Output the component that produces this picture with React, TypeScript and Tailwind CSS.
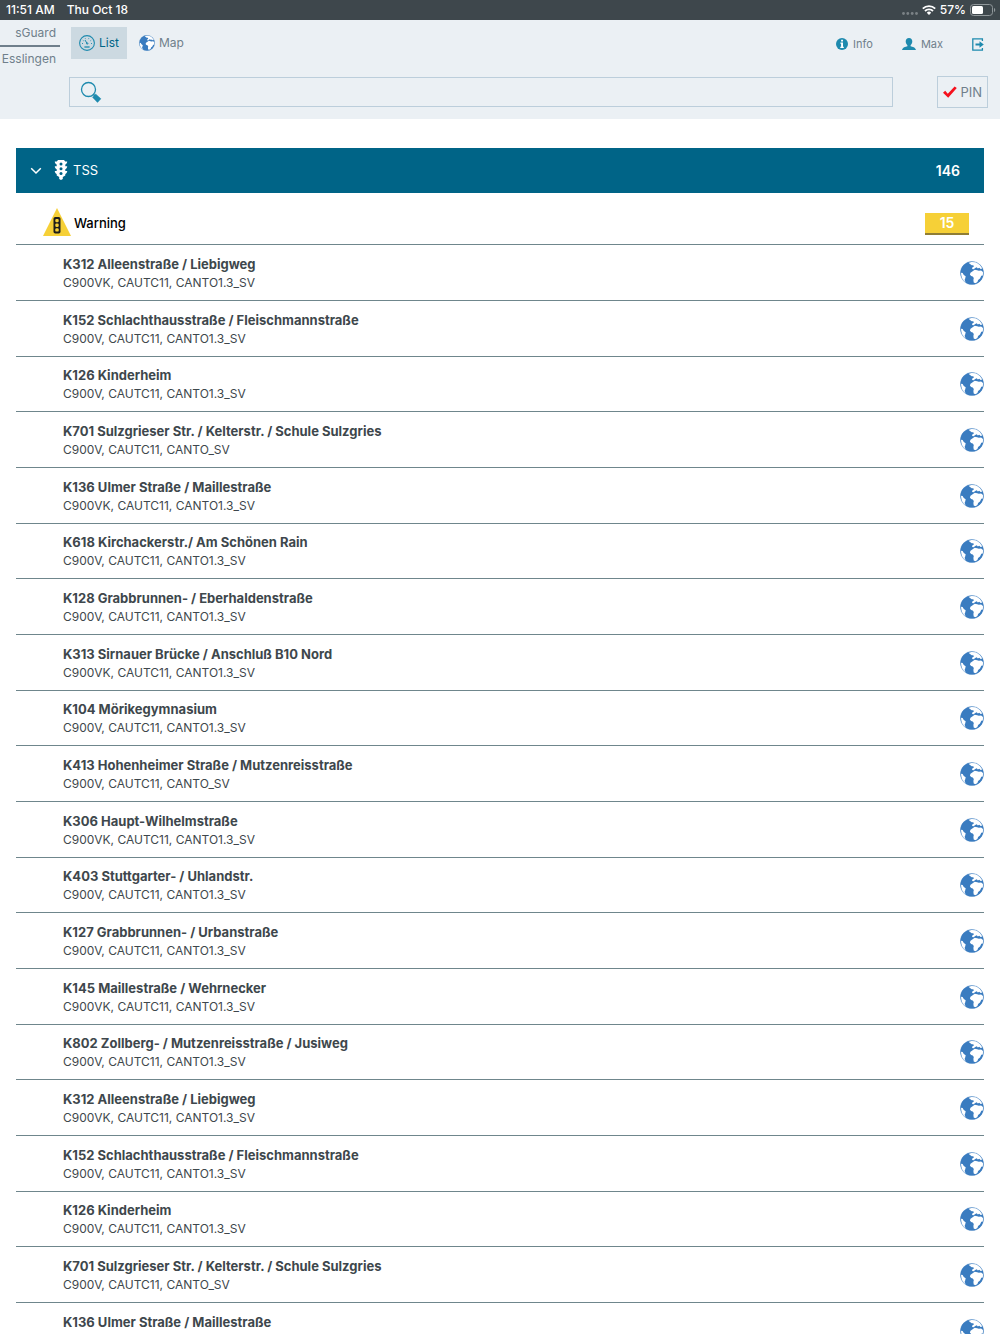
import type { ReactNode } from "react";

interface Junction {
  name: string;
  detail: string;
}

const CANTO13 = "C900V, CAUTC11, CANTO1.3_SV";
const CANTO13_VK = "C900VK, CAUTC11, CANTO1.3_SV";
const CANTO = "C900V, CAUTC11, CANTO_SV";

const junctions: Junction[] = [
  { name: "K312 Alleenstraße / Liebigweg", detail: CANTO13_VK },
  { name: "K152 Schlachthausstraße / Fleischmannstraße", detail: CANTO13 },
  { name: "K126 Kinderheim", detail: CANTO13 },
  { name: "K701 Sulzgrieser Str. / Kelterstr. / Schule Sulzgries", detail: CANTO },
  { name: "K136 Ulmer Straße / Maillestraße", detail: CANTO13_VK },
  { name: "K618 Kirchackerstr./ Am Schönen Rain", detail: CANTO13 },
  { name: "K128 Grabbrunnen- / Eberhaldenstraße", detail: CANTO13 },
  { name: "K313 Sirnauer Brücke / Anschluß B10 Nord", detail: CANTO13_VK },
  { name: "K104 Mörikegymnasium", detail: CANTO13 },
  { name: "K413 Hohenheimer Straße / Mutzenreisstraße", detail: CANTO },
  { name: "K306 Haupt-Wilhelmstraße", detail: CANTO13_VK },
  { name: "K403 Stuttgarter- / Uhlandstr.", detail: CANTO13 },
  { name: "K127 Grabbrunnen- / Urbanstraße", detail: CANTO13 },
  { name: "K145 Maillestraße / Wehrnecker", detail: CANTO13_VK },
  { name: "K802 Zollberg- / Mutzenreisstraße / Jusiweg", detail: CANTO13 },
];

// The list starts over once it has reached its end.
const rows = [...junctions, ...junctions.slice(0, 5)];

function Globe({ className }: { className: string }) {
  return (
    <svg viewBox="0 0 24 24" className={className} aria-hidden="true">
      <circle cx="12" cy="12" r="11.6" fill="#3a7cc0" />
      <g fill="#fff">
        {/* Europe and the Arctic */}
        <path d="M8.500 1.800l3.500-1.100 3.500.4 3.400 1.700 2.500 2.800.9 2-1.700.4-1.300-1.200-1.500.8-1-1.300-1.600.6-1.500 1.400-1.600-.3.200-1.400 1.600-1.100-.6-1.300-1.600.1-1-.9z" />
        {/* Africa */}
        <path d="M12.300 10.500l2.400-1.800 2.500.5 1.600.6 2.300-.3 2 1.400-.1 3.600-1.700.3-1.300 2.600-1.900 1.500-.7 2-2 1.300-1.700-.6-.3-2.600.4-1.900-1.100-1.700-1.600-.3-1.200-1.700.6-1.700z" />
        {/* South America */}
        <path d="M1 11.700l1.600.2 1.200 2 1.900 1.400-.5 2.100-.6 1.500 1.300 3-2.400-1.500C1.900 18.100.9 15 1 11.700z" />
      </g>
      <circle cx="12" cy="12" r="11.500" fill="none" stroke="#3a7cc0" strokeWidth="0.400" />
    </svg>
  );
}

function Gauge() {
  return (
    <svg viewBox="0 0 16 16" className="size-4" fill="none" stroke="#1e8aae" aria-hidden="true">
      <circle cx="8" cy="8" r="7.4" strokeWidth="1.1" />
      <path
        d="M3 8.500h1M3.800 5.200l.8.600M6.200 3.300l.4.800M9.800 3.300l-.4.800M12.200 5.200l-.8.600M12 8.500h1"
        strokeWidth="0.900"
      />
      <path d="M6 5l2 3.400" strokeWidth="1" />
      <circle cx="8.200" cy="8.500" r="0.700" />
      <path d="M5.400 12h5.200" strokeWidth="1.300" />
    </svg>
  );
}

function SearchIcon() {
  return (
    <svg viewBox="0 0 22 22" className="size-[22px]" fill="none" aria-hidden="true">
      <circle cx="8.500" cy="8.500" r="7" stroke="#1e8aae" strokeWidth="1.300" />
      <path d="M13.300 13.300l2 2" stroke="#1e8aae" strokeWidth="1.500" />
      <path
        d="M15.600 12.900l5.300 4.900-3.400 3.600-5-5.200z"
        fill="#1e8aae"
        stroke="#1e8aae"
        strokeWidth="0.500"
        strokeLinejoin="round"
      />
    </svg>
  );
}

function InfoIcon() {
  return (
    <svg viewBox="0 0 12 12" className="size-3" aria-hidden="true">
      <circle cx="6" cy="6" r="6" fill="#1e8aae" />
      <path d="M5.100 1.800h1.900v1.700H5.100zM4.400 4.600H7v4.200h.8v1.100H4.300V8.800h.8V5.700h-.7z" fill="#fff" />
    </svg>
  );
}

function UserIcon() {
  return (
    <svg viewBox="0 0 14 12" className="h-3 w-3.5" fill="#1e8aae" aria-hidden="true">
      <path d="M7 0c2.100 0 3.400 1.500 3.300 3.600C10.200 5.400 9.400 6.700 8.600 7.200v1c1.900.5 4.900 1.200 5.400 3.800H0c.5-2.600 3.500-3.300 5.400-3.800v-1C4.600 6.700 3.800 5.400 3.700 3.600 3.600 1.500 4.900 0 7 0z" />
    </svg>
  );
}

function LogoutIcon() {
  return (
    <svg viewBox="0 0 12 13" className="h-[13px] w-3" fill="none" stroke="#1e8aae" aria-hidden="true">
      <path d="M10.400 3V.8H.8v11.400h9.600V10" strokeWidth="1.300" />
      <path d="M3.500 6.500h5" strokeWidth="2" />
      <path d="M7.500 3.200l4.300 3.300-4.300 3.300z" fill="#1e8aae" stroke="none" />
    </svg>
  );
}

function TrafficLight() {
  return (
    <svg viewBox="0 0 14 20" className="h-5 w-3.5" aria-hidden="true">
      <path
        fill="#fff"
        d="M4 0h6l1.200 1.500h2c0 1.500-.7 2.500-1.900 2.900v1.900h1.900c0 1.500-.7 2.500-1.900 2.900v1.900h1.900c0 1.500-.7 2.500-1.900 2.900v1.500L8.800 17v2L7 20l-1.800-1v-2l-2.500-1.500V14C1.500 13.600.8 12.600.8 11.100h1.900V9.200C1.500 8.800.8 7.800.8 6.300h1.900V4.400C1.500 4 .8 3 .8 1.500h2z"
      />
      <g fill="#006487">
        <circle cx="7" cy="4" r="1.500" />
        <circle cx="7" cy="8.700" r="1.500" />
        <circle cx="7" cy="13.400" r="1.500" />
      </g>
    </svg>
  );
}

function WarningSign() {
  return (
    <svg viewBox="0 0 28 28" className="size-7" aria-hidden="true">
      <path d="M14 0l14 28H0z" fill="#f6d037" />
      <rect x="10.500" y="9" width="7" height="16.500" rx="1.800" fill="#1d1d1b" />
      <g fill="#f6d037">
        <rect x="12.300" y="10.900" width="3.400" height="3.300" rx="1.200" />
        <rect x="12.300" y="15.600" width="3.400" height="3.300" rx="1.200" />
        <rect x="12.300" y="20.300" width="3.400" height="3.300" rx="1.200" />
      </g>
    </svg>
  );
}

function StatusBar() {
  return (
    <div className="flex h-5 shrink-0 items-center bg-[#3e474c] pr-1 pl-1.5 text-xs font-medium text-white">
      <span>11:51 AM</span>
      <span className="ml-3">Thu Oct 18</span>
      <div className="ml-auto flex items-center gap-1">
        <svg viewBox="0 0 16 3" className="mt-1.5 h-[3px] w-4" fill="#7b8286" aria-hidden="true">
          <circle cx="1.500" cy="1.500" r="1.400" />
          <circle cx="5.800" cy="1.500" r="1.400" />
          <circle cx="10.200" cy="1.500" r="1.400" />
          <circle cx="14.500" cy="1.500" r="1.400" />
        </svg>
        <svg viewBox="0 0 14 10" className="h-2.5 w-3.5" fill="none" stroke="#fff" aria-hidden="true">
          <path d="M.8 3.600a8.800 8.800 0 0 1 12.400 0M3 6a5.600 5.600 0 0 1 8 0" strokeWidth="1.800" />
          <path d="M7 10L4.800 7.700a3.100 3.100 0 0 1 4.400 0z" fill="#fff" stroke="none" />
        </svg>
        <span>57%</span>
        <svg viewBox="0 0 26 12" className="h-3 w-[26px]" aria-hidden="true">
          <rect x="0.500" y="0.500" width="22" height="11" rx="3" fill="none" stroke="#90979a" />
          <rect x="2" y="2" width="11" height="8" rx="1.500" fill="#fff" />
          <path d="M24 4c1.600.4 1.600 3.600 0 4z" fill="#90979a" />
        </svg>
      </div>
    </div>
  );
}

function HeaderLink({ icon, children }: { icon: ReactNode; children: ReactNode }) {
  return (
    <a href="#" className="flex items-center gap-[5px] text-[11px] text-[#6f7f8b]">
      {icon}
      {children}
    </a>
  );
}

function Header() {
  return (
    <header className="flex h-[99px] shrink-0 bg-[#ebf0f4] text-[#6f7f8b]">
      <div className="w-15 shrink-0 text-right text-xs">
        <div className="border-b-2 border-[#6f7f8b] pt-[5px] pr-1 pb-1 leading-4">
          sGuard
        </div>
        <div className="pt-0.5 pr-1 leading-5">Esslingen</div>
      </div>

      <div className="flex grow flex-col pt-[7px] pr-3 pl-[9px]">
        <div className="flex items-center">
          <nav className="ml-0.5 flex gap-1 text-xs">
            <button
              type="button"
              className="flex h-8 items-center gap-1 bg-[#ccd9e1] px-2 text-[#006487]"
            >
              <Gauge />
              List
            </button>
            <button type="button" className="flex h-8 items-center gap-1 px-2">
              <Globe className="size-4" />
              Map
            </button>
          </nav>
          <div className="mt-0.5 ml-auto flex items-center gap-[29px] pr-1">
            <HeaderLink icon={<InfoIcon />}>Info</HeaderLink>
            <HeaderLink icon={<UserIcon />}>Max</HeaderLink>
            <button type="button" aria-label="Log out">
              <LogoutIcon />
            </button>
          </div>
        </div>

        <div className="mt-[17px] flex items-center gap-11">
          <label className="flex h-[30px] grow items-center border border-[#bccedb] pl-2.5">
            <SearchIcon />
            <input
              type="text"
              aria-label="Search"
              className="ml-2 min-w-0 grow bg-transparent text-sm outline-none"
            />
          </label>
          <button
            type="button"
            className="flex h-8 items-center gap-[3px] border border-[#bccedb] px-[5px] text-[13px] leading-5"
          >
            <svg viewBox="0 0 14 12" className="h-3 w-3.5" fill="#f5111d" aria-hidden="true">
              <path d="M0 6.800l2.200-2 2.600 2.900L11.600.5 13.800 2 5.200 11.800z" />
            </svg>
            PIN
          </button>
        </div>
      </div>
    </header>
  );
}

export default function App() {
  return (
    <div className="flex min-h-screen flex-col bg-white font-[Inter,sans-serif]">
      <StatusBar />
      <Header />

      <main className="px-4 pt-[29px]">
        <button
          type="button"
          className="flex h-[45px] w-full items-center bg-[#006487] pr-6 pl-3.5 text-white"
        >
          <svg
            viewBox="0 0 12 8"
            className="h-2 w-3"
            fill="none"
            stroke="currentColor"
            strokeWidth="1.500"
            aria-hidden="true"
          >
            <path d="M1.200 1.200l4.800 4.800 4.800-4.800" />
          </svg>
          <span className="ml-3 pb-0.5">
            <TrafficLight />
          </span>
          <span className="ml-[5px] text-[13px]">TSS</span>
          <span className="ml-auto text-sm font-semibold">146</span>
        </button>

        <div className="flex h-[52px] items-center border-b border-[#6f868c] pt-2.5 pr-[15px] pl-[27px]">
          <span className="pb-1">
            <WarningSign />
          </span>
          <h2 className="ml-[3px] text-[13px] font-medium text-black">Warning</h2>
          <span className="ml-auto w-11 border-b-2 border-[#8f7d35] bg-[#f6d037] text-center text-sm leading-5 font-semibold text-white">
            15
          </span>
        </div>

        <ul>
          {rows.map((row, i) => (
            <li
              key={i}
              className="flex h-14 items-center border-b border-[#6f868c] pl-[47px] text-[#3e474c] nth-[3n]:h-[55px]"
            >
              <div>
                <h3 className="text-[13px] leading-5 font-bold">{row.name}</h3>
                <p className="text-xs leading-[18px]">{row.detail}</p>
              </div>
              <button type="button" aria-label={`Show ${row.name} on map`} className="ml-auto">
                <Globe className="size-6" />
              </button>
            </li>
          ))}
        </ul>
      </main>
    </div>
  );
}
